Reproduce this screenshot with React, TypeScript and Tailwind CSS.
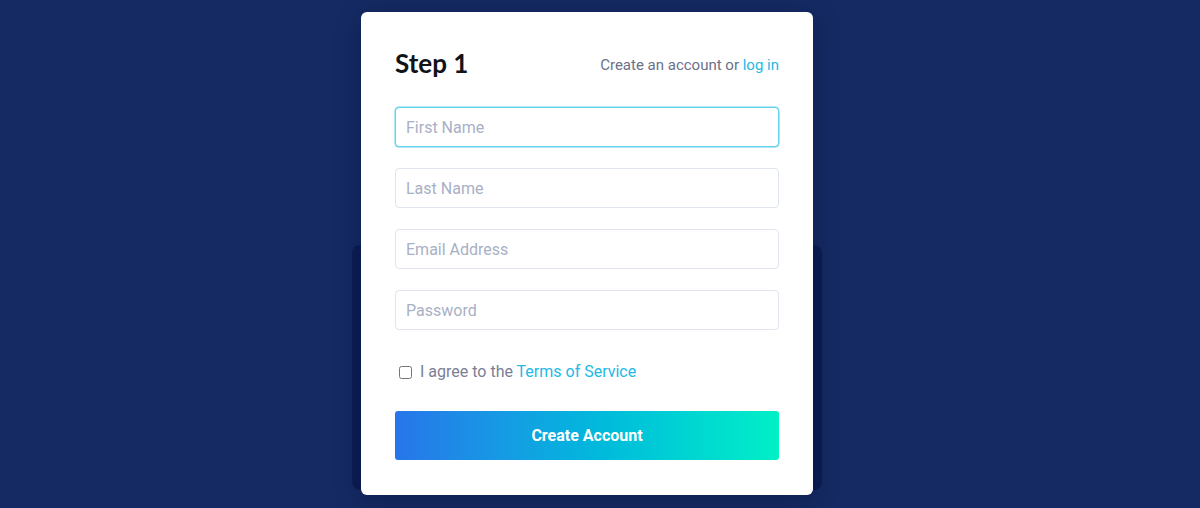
import { useState } from "react"

const inputBase =
  "h-10 w-full rounded-[4px] border bg-white px-[10px] text-[16px] text-[#3b4256] outline-none placeholder:text-[#a8b0c5]"

function Field({ placeholder, focused, type = "text" }: { placeholder: string; focused?: boolean; type?: string }) {
  return (
    <input
      type={type}
      placeholder={placeholder}
      className={`${inputBase} ${focused ? "border-[#66d2ec] shadow-[0_0_0_0.5px_#66d2ec]" : "border-[#dfe4ef]"}`}
    />
  )
}

export default function App() {
  const [agreed, setAgreed] = useState(false)

  return (
    <div
      className="h-[508px] w-full overflow-hidden bg-[#152a63] pt-[12px] pl-[361px]"
      style={{ fontFamily: "Roboto, 'Liberation Sans', sans-serif" }}
    >
      <div className="relative w-[452px]">
        <div className="absolute left-[-9px] right-[-9px] top-[233px] h-[245px] rounded-[8px] bg-[#0c1d52]" />
        <div className="relative flex h-[483px] flex-col rounded-[6px] bg-white px-[34px] pt-[35px] shadow-[0_6px_24px_rgba(5,15,50,0.35)]">
          <div className="flex items-center justify-between">
            <h1 className="text-[26px] font-bold leading-[32px] text-[#111318]" style={{ fontFamily: "Lato, sans-serif" }}>
              Step 1
            </h1>
            <p className="mt-[5px] text-[15px] text-[#6a7189]">
              Create an account or <a className="text-[#23b9e6]">log in</a>
            </p>
          </div>

          <form className="mt-[28px] flex flex-col gap-[21px]">
            <Field placeholder="First Name" focused />
            <Field placeholder="Last Name" />
            <Field placeholder="Email Address" type="email" />
            <Field placeholder="Password" type="password" />

            <label className="mt-[9px] flex items-center gap-[8px] pl-[4px] text-[16px] text-[#7a8095]">
              <input
                type="checkbox"
                checked={agreed}
                onChange={(e) => setAgreed(e.target.checked)}
                className="h-[13px] w-[13px] accent-[#23b9e6]"
              />
              <span>
                I agree to the <a className="text-[#23b9e6]">Terms of Service</a>
              </span>
            </label>

            <button
              type="button"
              className="mt-[6px] h-[49px] w-full rounded-[3px] bg-gradient-to-r from-[#2775ea] to-[#00f0c6] text-[16px] font-bold text-white"
            >
              Create Account
            </button>
          </form>
        </div>
      </div>
    </div>
  )
}
